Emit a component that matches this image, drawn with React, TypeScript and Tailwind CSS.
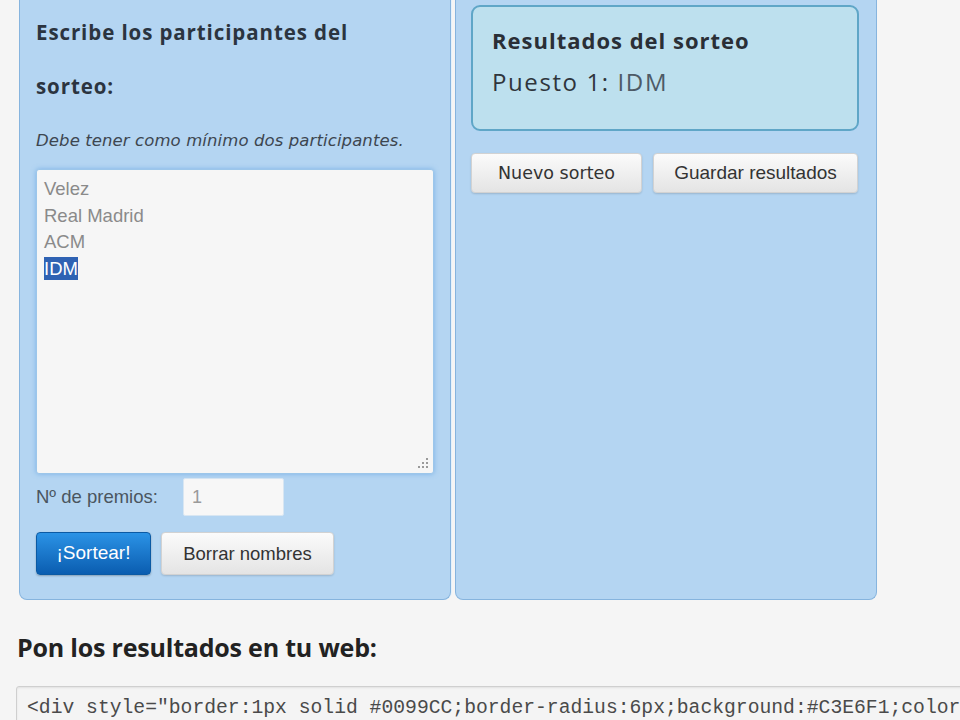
const sans = "font-['Liberation_Sans',Arial,sans-serif]";
const head = "font-['Open_Sans','Noto_Sans',sans-serif]";

function GrayButton({ label, className = "" }: { label: string; className?: string }) {
  return (
    <button
      className={`rounded-[4px] border border-[#d2d2d2] bg-gradient-to-b from-[#fbfbfb] to-[#e4e4e4] text-[#333] shadow-[0_1px_2px_rgba(0,0,0,0.15)] ${className}`}
    >
      {label}
    </button>
  );
}

export default function App() {
  const teams = ["Velez", "Real Madrid", "ACM"];

  return (
    <div className="min-h-[720px] w-[960px] overflow-hidden bg-[#f5f5f5]">
      <div className="flex gap-[4px] pl-[19px]">
        {/* participants panel */}
        <div className="w-[432px] rounded-b-[8px] border border-t-0 border-[#86b4de] bg-[#b4d5f2] px-[16px] pt-[5px] pb-[24px] shadow-[1px_0_0_#e4f1fb]">
          <h2 className={`${head} text-[20.5px] font-bold leading-[54px] tracking-[0.9px] text-[#2b3440]`}>
            Escribe los participantes del
            <br />
            sorteo:
          </h2>
          <p className="mt-[18px] font-['DejaVu_Sans',Verdana,sans-serif] text-[16.5px] italic leading-[20px] tracking-[0.1px] text-[#3d4650]">
            Debe tener como mínimo dos participantes.
          </p>
          <div className="relative mt-[18px] h-[305px] w-[398px] rounded-[3px] border border-[#9cc6ea] bg-[#f6f6f6] px-[7px] pt-[6px] shadow-[0_0_5px_rgba(80,150,220,0.55)]">
            {teams.map((t) => (
              <div key={t} className={`${sans} text-[18.5px] leading-[26.5px] text-[#8a8a8a]`}>
                {t}
              </div>
            ))}
            <div className={`${sans} text-[18.5px] leading-[26.5px]`}>
              <span className="bg-[#2f62b3] py-[1px] text-white">IDM</span>
            </div>
            {/* resize grip */}
            <svg className="absolute right-[3px] bottom-[3px]" width="14" height="14" viewBox="0 0 14 14">
              <g fill="#9a9a9a">
                <rect x="10" y="2" width="2" height="2" />
                <rect x="6" y="6" width="2" height="2" />
                <rect x="10" y="6" width="2" height="2" />
                <rect x="2" y="10" width="2" height="2" />
                <rect x="6" y="10" width="2" height="2" />
                <rect x="10" y="10" width="2" height="2" />
              </g>
            </svg>
          </div>
          <div className="mt-[4px] flex items-center">
            <span className={`${sans} w-[147px] text-[18.5px] text-[#4a5560]`}>Nº de premios:</span>
            <div className={`${sans} flex h-[38px] w-[101px] items-center rounded-[2px] border border-[#d8e6f2] bg-[#f7f7f7] pl-[8px] text-[18px] text-[#9a9a9a]`}>
              1
            </div>
          </div>
          <div className="mt-[16px] flex gap-[10px]">
            <button
              className={`${sans} h-[43px] w-[115px] rounded-[4px] border border-[#0b5aa4] bg-gradient-to-b from-[#2b93e6] to-[#0a5db0] text-[19px] text-white shadow-[0_1px_2px_rgba(0,0,0,0.25)]`}
            >
              ¡Sortear!
            </button>
            <GrayButton label="Borrar nombres" className={`${sans} h-[43px] w-[173px] text-[18.5px]`} />
          </div>
        </div>

        {/* results panel */}
        <div className="flex w-[422px] flex-col rounded-b-[8px] border border-t-0 border-[#86b4de] bg-[#b4d5f2] pt-[5px] pr-[17px] pl-[15px]">
          <div className="h-[126px] rounded-[9px] border-2 border-[#5fa6c7] bg-[#bde0ee] pt-[16px] pl-[19px]">
            <div className={`${head} text-[22px] font-bold leading-[34px] tracking-[1px] text-[#2a2f36]`}>
              Resultados del sorteo
            </div>
            <div className={`${head} mt-[8px] text-[24px] leading-[34px] tracking-[1.6px] text-[#2f353c]`}>
              Puesto 1: <span className="text-[#4d5a66]">IDM</span>
            </div>
          </div>
          <div className="mt-[22px] flex gap-[11px]">
            <GrayButton
              label="Nuevo sorteo"
              className="h-[40px] w-[171px] font-['DejaVu_Sans',Verdana,sans-serif] text-[17.5px]"
            />
            <GrayButton label="Guardar resultados" className={`${sans} h-[40px] w-[205px] text-[19px]`} />
          </div>
        </div>
      </div>

      {/* embed code */}
      <div className="pt-[28px] pl-[17px]">
        <h3 className={`${head} text-[25px] leading-[38px] font-bold tracking-[-0.2px] text-[#222]`}>
          Pon los resultados en tu web:
        </h3>
        <div className="mt-[20px] -mr-[40px] ml-[-1px] h-[60px] rounded-[3px] border border-[#cfcfcf] bg-[#f4f4f4] pt-[8px] pl-[10px] shadow-[inset_0_1px_2px_rgba(0,0,0,0.08)]">
          <div className="font-['Liberation_Mono','Courier_New',monospace] text-[19.7px] leading-[26px] whitespace-nowrap text-[#4a4a4a]">
            {'<div style="border:1px solid #0099CC;border-radius:6px;background:#C3E6F1;color:#333;padding:10px">'}
          </div>
        </div>
      </div>
    </div>
  );
}
